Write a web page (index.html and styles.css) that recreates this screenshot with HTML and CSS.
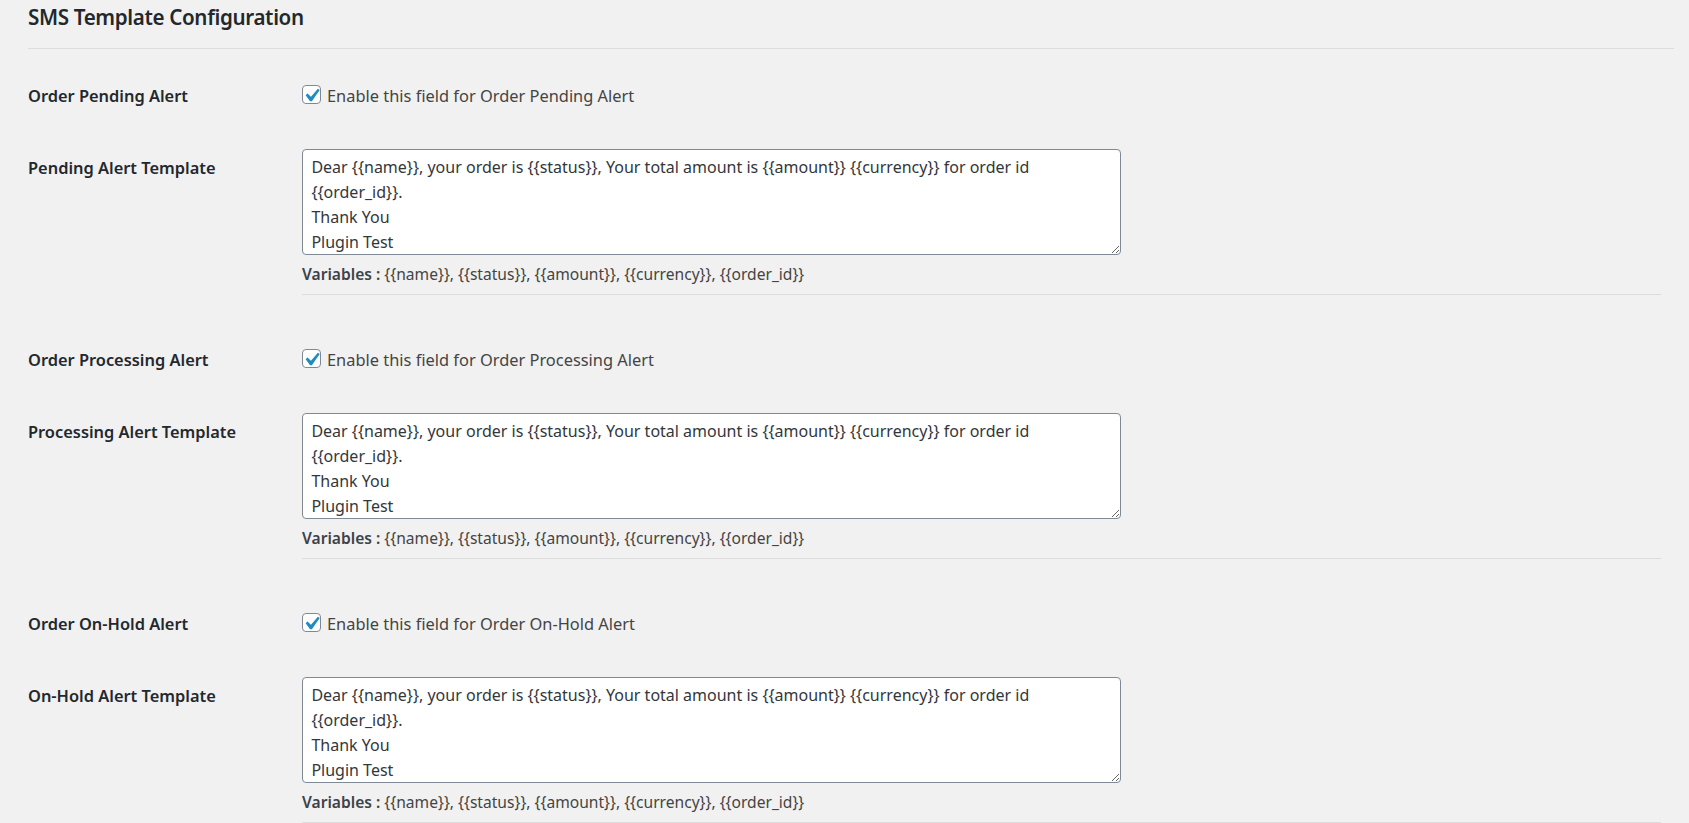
FILE: index.html
```html
<!DOCTYPE html>
<html lang="en">
<head>
<meta charset="utf-8">
<title>SMS Template Configuration</title>
<link rel="stylesheet" href="styles.css">
</head>
<body>
<div class="wrap">
  <h2 class="title">SMS Template Configuration</h2>
  <div class="hr"></div>

  <section class="group">
    <div class="row row-check">
      <div class="label">Order Pending Alert</div>
      <label class="check"><span class="box"><svg viewBox="3.81 2.86 12.57 12.57" width="17" height="17"><path d="M14.83 4.89l1.34.94-5.81 8.38H9.02L5.78 9.67l1.34-1.25 2.57 2.4z" fill="#1e8cbe"/></svg></span><span>Enable this field for Order Pending Alert</span></label>
    </div>
    <div class="row row-tpl">
      <div class="label label-tpl">Pending Alert Template</div>
      <div class="field">
        <textarea class="tpl" rows="4" readonly>Dear {{name}}, your order is {{status}}, Your total amount is {{amount}} {{currency}} for order id {{order_id}}.
Thank You
Plugin Test</textarea>
        <p class="vars"><b>Variables :</b> {{name}}, {{status}}, {{amount}}, {{currency}}, {{order_id}}</p>
        <div class="rule"></div>
      </div>
    </div>
  </section>

  <section class="group">
    <div class="row row-check">
      <div class="label">Order Processing Alert</div>
      <label class="check"><span class="box"><svg viewBox="3.81 2.86 12.57 12.57" width="17" height="17"><path d="M14.83 4.89l1.34.94-5.81 8.38H9.02L5.78 9.67l1.34-1.25 2.57 2.4z" fill="#1e8cbe"/></svg></span><span>Enable this field for Order Processing Alert</span></label>
    </div>
    <div class="row row-tpl">
      <div class="label label-tpl">Processing Alert Template</div>
      <div class="field">
        <textarea class="tpl" rows="4" readonly>Dear {{name}}, your order is {{status}}, Your total amount is {{amount}} {{currency}} for order id {{order_id}}.
Thank You
Plugin Test</textarea>
        <p class="vars"><b>Variables :</b> {{name}}, {{status}}, {{amount}}, {{currency}}, {{order_id}}</p>
        <div class="rule"></div>
      </div>
    </div>
  </section>

  <section class="group">
    <div class="row row-check">
      <div class="label">Order On-Hold Alert</div>
      <label class="check"><span class="box"><svg viewBox="3.81 2.86 12.57 12.57" width="17" height="17"><path d="M14.83 4.89l1.34.94-5.81 8.38H9.02L5.78 9.67l1.34-1.25 2.57 2.4z" fill="#1e8cbe"/></svg></span><span>Enable this field for Order On-Hold Alert</span></label>
    </div>
    <div class="row row-tpl">
      <div class="label label-tpl">On-Hold Alert Template</div>
      <div class="field">
        <textarea class="tpl" rows="4" readonly>Dear {{name}}, your order is {{status}}, Your total amount is {{amount}} {{currency}} for order id {{order_id}}.
Thank You
Plugin Test</textarea>
        <p class="vars"><b>Variables :</b> {{name}}, {{status}}, {{amount}}, {{currency}}, {{order_id}}</p>
        <div class="rule"></div>
      </div>
    </div>
  </section>
</div>
</body>
</html>
```

FILE: styles.css
```css
html, body {
  margin: 0;
  padding: 0;
  background: #f1f1f1;
}

body {
  font-family: "Noto Sans", "Open Sans", sans-serif;
  font-size: 16.4px;
  color: #444;
  overflow: hidden;
}

.wrap {
  padding: 0 15px 0 28px;
}

.title {
  margin: 2px 0 0;
  font-size: 20.6px;
  letter-spacing: -0.35px;
  line-height: 30px;
  font-weight: 600;
  color: #23282d;
}

.hr {
  height: 1px;
  margin-top: 16px;
  background: #dcdcde;
}

.group {
  margin-top: 52px;
}

.group:first-of-type {
  margin-top: 34px;
}

.row {
  display: grid;
  grid-template-columns: 274px 1fr;
}

.row-check {
  height: 25px;
  line-height: 25px;
}

.label {
  font-weight: 600;
  color: #23282d;
  line-height: 25px;
}

.check {
  display: flex;
  align-items: flex-start;
  gap: 6px;
  color: #444;
}

.box {
  box-sizing: border-box;
  width: 19px;
  height: 19px;
  margin-top: 2px;
  border: 1px solid #7e8993;
  border-radius: 4px;
  background: #fff;
  display: flex;
  align-items: center;
  justify-content: center;
  flex: none;
}

.box svg {
  display: block;
}

.row-tpl {
  margin-top: 41.3px;
}

.label-tpl {
  padding-top: 5.8px;
}

.field {
  display: flex;
  flex-direction: column;
  align-items: flex-start;
}

.tpl {
  box-sizing: border-box;
  width: 819px;
  height: 106px;
  margin: 0;
  padding: 5px 8px 0 8.4px;
  border: 1px solid #7e8993;
  border-radius: 4px;
  background: #fff;
  color: #32373c;
  font-family: "Noto Sans", "Open Sans", sans-serif;
  font-size: 16px;
  line-height: 25px;
  overflow: hidden;
  resize: both;
  outline: none;
}

.vars {
  margin: 6.4px 0 0;
  font-size: 15.6px;
  line-height: 25px;
  color: #444;
}

.vars b {
  font-weight: 600;
  color: #3c434a;
}

.rule {
  align-self: stretch;
  height: 1px;
  margin: 7.3px 13px 0 0;
  background: #dcdcde;
}
```
